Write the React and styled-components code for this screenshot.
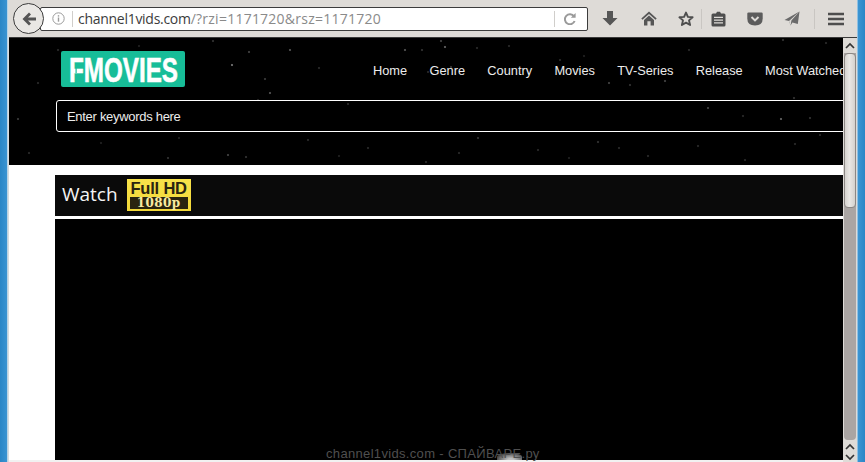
import React from "react";
import styled, { createGlobalStyle } from "styled-components";

const GlobalStyle = createGlobalStyle`
  html, body {
    margin: 0;
    padding: 0;
    height: 100%;
    overflow: hidden;
    background: #fff;
    font-family: "Liberation Sans", Arial, sans-serif;
  }
`;

// star field seen behind the site header, placed by eye
const starSpots = [
  [223, 27, 0.7], [240, 14, 0.4], [281, 12, 0.5], [256, 41, 0.35], [261, 55, 0.5], [249, 62, 0.25],
  [396, 12, 0.5], [432, 3, 0.4], [436, 9, 0.6], [442, 29, 0.35], [419, 34, 0.25], [413, 12, 0.3],
  [468, 10, 0.25], [551, 22, 0.25], [600, 45, 0.4], [621, 47, 0.3], [656, 43, 0.4],
  [774, 2, 0.3], [817, 5, 0.25], [785, 60, 0.3], [734, 78, 0.25], [801, 80, 0.3], [772, 81, 0.6],
  [811, 97, 0.25], [786, 106, 0.25], [736, 122, 0.25], [204, 3, 0.3], [9, 81, 0.35], [20, 115, 0.25],
  [92, 105, 0.2], [159, 120, 0.3], [219, 117, 0.4], [237, 119, 0.3], [299, 102, 0.25],
  [359, 110, 0.25], [417, 124, 0.25], [469, 100, 0.3], [529, 112, 0.25], [589, 104, 0.3],
  [639, 118, 0.25], [689, 108, 0.25], [699, 70, 0.4], [49, 12, 0.25], [29, 45, 0.25], [339, 66, 0.25],
  [130, 8, 0.2], [170, 100, 0.2], [310, 30, 0.25], [500, 8, 0.25], [575, 18, 0.2], [680, 12, 0.25],
  [720, 40, 0.25], [330, 118, 0.2], [450, 115, 0.25], [560, 120, 0.2], [610, 110, 0.25],
];

const starField = starSpots
  .map(
    ([x, y, a]) =>
      `radial-gradient(circle at ${x}px ${y}px, rgba(255,255,255,${a}) 0, rgba(255,255,255,0) 1.6px)`
  )
  .join(",");

const Screen = styled.div`
  display: flex;
  width: 865px;
  height: 462px;
  overflow: hidden;
  position: relative;
`;

const DesktopEdge = styled.div`
  flex: 0 0 ${(p) => p.$w}px;
  background: ${(p) =>
    p.$right
      ? "linear-gradient(to right, #b9d6ea 0, #3a94d2 1.5px, #2a86c6 100%)"
      : "linear-gradient(to right, #2a86c6 0, #3a94d2 7px, #cfdfe9 7.6px, #dedbd7 100%)"};
`;

const Browser = styled.div`
  flex: 1;
  min-width: 0;
  display: flex;
  flex-direction: column;
`;

const Toolbar = styled.div`
  flex: 0 0 38px;
  box-sizing: border-box;
  border-bottom: 1px solid #3a3a3a;
  background: #dedbd7;
  display: flex;
  align-items: center;
  position: relative;
`;

const BackButton = styled.div`
  position: absolute;
  left: 4px;
  top: 3px;
  width: 31px;
  height: 31px;
  box-sizing: border-box;
  border: 1px solid #3c3c3c;
  border-radius: 50%;
  background: #e9e7e4;
  display: flex;
  align-items: center;
  justify-content: center;
  z-index: 1;
`;

const UrlBar = styled.div`
  margin-left: 31px;
  flex: 0 0 548px;
  height: 24px;
  box-sizing: border-box;
  border: 1px solid #3c3c3c;
  border-radius: 2px;
  background: #fff;
  display: flex;
  align-items: center;
  padding-left: 11px;
`;

const InfoIcon = styled.div`
  flex: 0 0 13px;
  height: 13px;
  display: flex;
`;

const UrlDivider = styled.div`
  flex: 0 0 1px;
  height: 16px;
  background: #d0cecb;
  margin: ${(p) => p.$margin};
`;

const UrlText = styled.div`
  flex: 1;
  font-family: "Open Sans", sans-serif;
  font-size: 14px;
  color: #8a8a8a;
  white-space: nowrap;
  letter-spacing: 0.24px;
`;

const UrlHost = styled.span`
  color: #3c3c3c;
  letter-spacing: -0.28px;
`;

const ReloadIcon = styled.svg`
  margin-right: 11px;
`;

const ToolIcon = styled.div`
  flex: 0 0 16px;
  height: 16px;
  margin-left: ${(p) => p.$left}px;
  display: flex;
  align-items: center;
  justify-content: center;
`;

const ToolDivider = styled.div`
  flex: 0 0 1px;
  height: 20px;
  margin-left: ${(p) => p.$left}px;
  background: #c9c6c2;
`;

const Viewport = styled.div`
  flex: 1;
  min-height: 0;
  display: flex;
  position: relative;
`;

const Page = styled.div`
  flex: 1;
  min-width: 0;
  overflow: hidden;
  background: #fff;
`;

const SiteHeader = styled.header`
  height: 127px;
  box-sizing: border-box;
  padding: 13px 0 0 47px;
  background-color: #000;
  background-image: ${starField};
`;

const TopRow = styled.div`
  display: flex;
  align-items: center;
  white-space: nowrap;
`;

const Logo = styled.svg`
  flex: 0 0 124px;
  margin-left: 5px;
  height: 36px;
`;

const Nav = styled.nav`
  display: flex;
  gap: 22.3px;
  margin: 3px 0 0 188px;
`;

const NavLink = styled.a`
  font-size: 12.8px;
  color: #ececec;
`;

const SearchBox = styled.div`
  margin-top: 13px;
  width: 900px;
  height: 32px;
  box-sizing: border-box;
  border: 1px solid #fff;
  border-radius: 3px;
  padding-left: 10px;
  display: flex;
  align-items: center;
  font-size: 13px;
  letter-spacing: -0.3px;
  color: #ececec;
`;

const Content = styled.main`
  margin: 10px 0 0 46px;
`;

const WatchBar = styled.div`
  height: 41px;
  background: #0a0a0a;
  display: flex;
  align-items: center;
  padding-left: 7px;
  gap: 10px;
`;

const WatchTitle = styled.span`
  font-family: "Open Sans", sans-serif;
  font-size: 19px;
  margin-top: -3px;
  color: #f4f4f4;
`;

const HdBadge = styled.div`
  width: 64px;
  height: 32px;
  box-sizing: border-box;
  padding: 2px 3px;
  margin-top: -1px;
  margin-left: -1px;
  background: linear-gradient(to bottom, #f8e24a, #f2d838);
  display: flex;
  flex-direction: column;
  align-items: center;
  font-weight: 700;
`;

const HdTop = styled.span`
  font-size: 16.5px;
  line-height: 15px;
  letter-spacing: -0.2px;
  color: #2a2410;
`;

const HdBottom = styled.span`
  margin-top: 1px;
  width: 100%;
  height: 12px;
  background: #2a2410;
  color: #f8eaa0;
  font-family: "DejaVu Serif", serif;
  font-size: 12px;
  line-height: 12px;
  letter-spacing: 0.4px;
  text-align: center;
`;

const Player = styled.div`
  margin-top: 3px;
  height: 241px;
  background: #000;
`;

const Scrollbar = styled.div`
  flex: 0 0 14px;
  background: #dedbd7;
  display: flex;
  flex-direction: column;
  align-items: center;
`;

const ArrowCell = styled.div`
  flex: 0 0 ${(p) => p.$h}px;
  display: flex;
  align-items: center;
  justify-content: center;
`;

const Track = styled.div`
  flex: 1;
  width: 12px;
  background: #aaa5a3;
  border-radius: 0 0 4px 4px;
  box-sizing: border-box;
`;

const Thumb = styled.div`
  width: 100%;
  height: 155px;
  box-sizing: border-box;
  border: 1px solid #8b8784;
  border-radius: 4px;
  background: linear-gradient(to right, #d6d3cf, #e9e7e4 45%, #d4d1cd);
`;

const Watermark = styled.div`
  position: absolute;
  left: 317px;
  bottom: 0;
  font-size: 13px;
  line-height: 16px;
  letter-spacing: 0.33px;
  color: #4f4f4f;
  white-space: nowrap;
`;

const WatermarkBlob = styled.div`
  position: absolute;
  left: 488px;
  bottom: 2px;
  width: 25px;
  height: 7px;
  border-radius: 50% 50% 0 0;
  background: radial-gradient(ellipse at 55% 100%, #c0c0c0 15%, #666 60%, #000 100%);
`;

const FooterLine = styled.div`
  position: absolute;
  left: 0;
  right: 14px;
  bottom: 0;
  height: 2px;
  background: #f1f1f1;
`;

const Chevron = ({ up }) => (
  <svg width="10" height="7" viewBox="0 0 10 7">
    <path
      d={up ? "M1 6 L5 2 L9 6" : "M1 1 L5 5 L9 1"}
      fill="none"
      stroke="#333"
      strokeWidth="1.7"
    />
  </svg>
);

const navItems = ["Home", "Genre", "Country", "Movies", "TV-Series", "Release", "Most Watched"];

export default function App() {
  return (
    <>
      <GlobalStyle />
      <Screen>
        <DesktopEdge $w={9} />
        <Browser>
          <Toolbar>
            <BackButton>
              <svg width="16" height="16" viewBox="0 0 16 16">
                <path d="M8 1.5 L1.5 8 L8 14.5 L10 12.5 L7 9.6 H15 V6.4 H7 L10 3.5 Z" fill="#555" />
              </svg>
            </BackButton>
            <UrlBar>
              <InfoIcon>
                <svg width="13" height="13" viewBox="0 0 13 13">
                  <circle cx="6.5" cy="6.5" r="5.7" fill="none" stroke="#9a9a9a" />
                  <rect x="5.8" y="5.5" width="1.4" height="4.2" fill="#9a9a9a" />
                  <rect x="5.8" y="3.2" width="1.4" height="1.4" fill="#9a9a9a" />
                </svg>
              </InfoIcon>
              <UrlDivider $margin="0 5px 0 7px" />
              <UrlText>
                <UrlHost>channel1vids.com</UrlHost>/?rzi=1171720&amp;rsz=1171720
              </UrlText>
              <UrlDivider $margin="0 9px 0 0" />
              <ReloadIcon width="12" height="12" viewBox="0 0 12 12">
                <path d="M10 3.4 A5 5 0 1 0 10.6 8" fill="none" stroke="#9a9a9a" strokeWidth="2" />
                <path d="M6.8 4.8 H11.6 V0 Z" fill="#9a9a9a" />
              </ReloadIcon>
            </UrlBar>
            <ToolIcon $left={14}>
              <svg width="16" height="15" viewBox="0 0 16 15">
                <path d="M5 0 H11 V7 H15.5 L8 14.5 L0.5 7 H5 Z" fill="#565656" />
              </svg>
            </ToolIcon>
            <ToolIcon $left={23}>
              <svg width="16" height="15" viewBox="0 0 16 15">
                <path d="M8 0.5 L0.3 7.6 L1.5 8.8 L8 3 L14.5 8.8 L15.7 7.6 Z" fill="#565656" />
                <path d="M3 9 L8 4.6 L13 9 V14.5 H9.6 V10.2 H6.4 V14.5 H3 Z" fill="#565656" />
              </svg>
            </ToolIcon>
            <ToolIcon $left={21}>
              <svg width="16" height="16" viewBox="0 0 16 16">
                <path
                  d="M8 1.6 L9.9 5.9 L14.6 6.3 L11 9.4 L12.1 14 L8 11.6 L3.9 14 L5 9.4 L1.4 6.3 L6.1 5.9 Z"
                  fill="none"
                  stroke="#4e4e4e"
                  strokeWidth="1.9"
                  strokeLinejoin="round"
                />
              </svg>
            </ToolIcon>
            <ToolDivider $left={7} />
            <ToolIcon $left={8}>
              <svg width="15" height="16" viewBox="0 0 15 16">
                <path
                  d="M2 2.5 H5 L6 0.8 H9 L10 2.5 H13 Q14.5 2.5 14.5 4 V14 Q14.5 15.5 13 15.5 H2 Q0.5 15.5 0.5 14 V4 Q0.5 2.5 2 2.5 Z"
                  fill="#4e4e4e"
                />
                <path d="M3 6.3 H12 M3 9.1 H12 M3 11.9 H12" stroke="#dedbd7" strokeWidth="1.2" />
              </svg>
            </ToolIcon>
            <ToolIcon $left={21}>
              <svg width="16" height="14" viewBox="0 0 16 14">
                <path
                  d="M1.5 0.5 H14.5 Q15.7 0.5 15.7 1.8 V6.5 Q15.7 13.5 8 13.5 Q0.3 13.5 0.3 6.5 V1.8 Q0.3 0.5 1.5 0.5 Z"
                  fill="#5c5c5c"
                />
                <path d="M4.5 5 L8 8.4 L11.5 5" fill="none" stroke="#dedbd7" strokeWidth="2" />
              </svg>
            </ToolIcon>
            <ToolIcon $left={21}>
              <svg width="16" height="15" viewBox="0 0 16 15">
                <path d="M15.5 0.5 L0.5 9 L5 10 L6.6 14.5 L8.4 11.4 L13.8 13 Z" fill="#6a6a6a" />
                <path d="M15.5 0.5 L5 10 L6.6 14.5 L7.4 9.6 Z" fill="#dedbd7" />
              </svg>
            </ToolIcon>
            <ToolDivider $left={14} />
            <ToolIcon $left={13}>
              <svg width="16" height="14" viewBox="0 0 16 14">
                <path d="M0 2 H16 M0 7 H16 M0 12 H16" stroke="#4e4e4e" strokeWidth="2.6" />
              </svg>
            </ToolIcon>
          </Toolbar>
          <Viewport>
            <Page>
              <SiteHeader>
                <TopRow>
                  <Logo viewBox="0 0 124 36">
                    <rect width="124" height="36" rx="2" fill="#17bd98" />
                    <text
                      x="8"
                      y="31"
                      textLength="109"
                      lengthAdjust="spacingAndGlyphs"
                      fontFamily="Liberation Sans"
                      fontWeight="700"
                      fontSize="35"
                      fill="#fff"
                      stroke="#fff"
                      strokeWidth="0.6"
                    >
                      FMOVIES
                    </text>
                    <rect x="14.5" y="16" width="1.2" height="6" fill="#17bd98" />
                  </Logo>
                  <Nav>
                    {navItems.map((item) => (
                      <NavLink key={item}>{item}</NavLink>
                    ))}
                  </Nav>
                </TopRow>
                <SearchBox>Enter keywords here</SearchBox>
              </SiteHeader>
              <Content>
                <WatchBar>
                  <WatchTitle>Watch</WatchTitle>
                  <HdBadge>
                    <HdTop>Full HD</HdTop>
                    <HdBottom>1080p</HdBottom>
                  </HdBadge>
                </WatchBar>
                <Player />
              </Content>
            </Page>
            <Scrollbar>
              <ArrowCell $h={15}>
                <Chevron up />
              </ArrowCell>
              <Track>
                <Thumb />
              </Track>
              <ArrowCell $h={13}>
                <Chevron up />
              </ArrowCell>
              <ArrowCell $h={9}>
                <Chevron />
              </ArrowCell>
            </Scrollbar>
            <FooterLine />
            <WatermarkBlob />
            <Watermark>channel1vids.com - СПАЙВАРЕ.ру</Watermark>
          </Viewport>
        </Browser>
        <DesktopEdge $w={8} $right />
      </Screen>
    </>
  );
}
